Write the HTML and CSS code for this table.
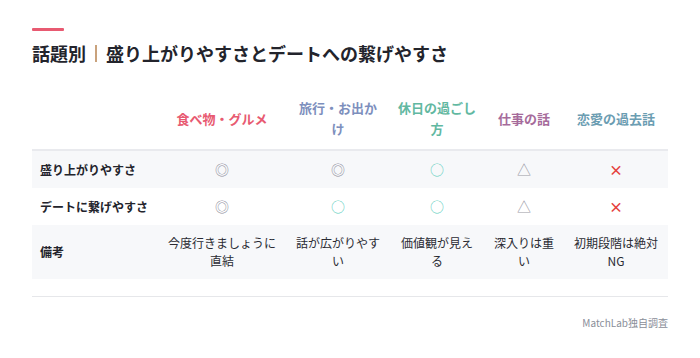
FILE: index.html
```html
<!DOCTYPE html>
<html lang="ja">
<head>
<meta charset="utf-8">
<link rel="stylesheet" href="styles.css">
</head>
<body>
<div class="page">
  <div class="accent"></div>
  <h1 class="title">話題別<span class="sep"></span>盛り上がりやすさとデートへの繋げやすさ</h1>
  <table class="grid">
    <colgroup>
      <col class="c1"><col class="c2"><col class="c3"><col class="c4"><col class="c5"><col class="c6">
    </colgroup>
    <thead>
      <tr>
        <th></th>
        <th class="h-food">食べ物・グルメ</th>
        <th class="h-trip">旅行・お出かけ</th>
        <th class="h-holiday">休日の過ごし方</th>
        <th class="h-work">仕事の話</th>
        <th class="h-love">恋愛の過去話</th>
      </tr>
    </thead>
    <tbody>
      <tr class="alt">
        <td class="label">盛り上がりやすさ</td>
        <td><span class="mk dbl">◎</span></td>
        <td><span class="mk dbl">◎</span></td>
        <td><span class="mk ok">○</span></td>
        <td><span class="mk tri">△</span></td>
        <td><span class="mk ng">×</span></td>
      </tr>
      <tr>
        <td class="label">デートに繋げやすさ</td>
        <td><span class="mk dbl">◎</span></td>
        <td><span class="mk ok">○</span></td>
        <td><span class="mk ok">○</span></td>
        <td><span class="mk tri">△</span></td>
        <td><span class="mk ng">×</span></td>
      </tr>
      <tr class="alt">
        <td class="label">備考</td>
        <td>今度行きましょうに直結</td>
        <td>話が広がりやすい</td>
        <td>価値観が見える</td>
        <td>深入りは重い</td>
        <td>初期段階は絶対NG</td>
      </tr>
    </tbody>
  </table>
  <div class="source">MatchLab独自調査</div>
</div>
</body>
</html>
```

FILE: styles.css
```css
html, body {
  margin: 0;
  padding: 0;
  background: #ffffff;
}
body {
  font-family: "Noto Sans CJK JP", "Noto Sans", sans-serif;
  color: #23242c;
}
.page {
  padding: 28px 32px 0 32px;
}
.accent {
  width: 32px;
  height: 3px;
  background: #e85a71;
  border-radius: 1px;
}
.title {
  margin: 9px 0 0 0;
  font-size: 18px;
  line-height: 26px;
  font-weight: 700;
  color: #23242c;
  display: flex;
  align-items: center;
}
.sep {
  display: inline-block;
  width: 2px;
  height: 17px;
  background: #c9a27c;
  margin: 0 9px;
}
.grid {
  margin-top: 21px;
  width: 636px;
  border-collapse: collapse;
  table-layout: fixed;
}
.c1 { width: 126px; }
.c2 { width: 128px; }
.c3 { width: 104px; }
.c4 { width: 94px; }
.c5 { width: 80px; }
.c6 { width: 104px; }
.grid th {
  font-size: 13px;
  line-height: 21px;
  font-weight: 700;
  padding: 10px 7px;
  text-align: center;
  vertical-align: middle;
  border-bottom: 2px solid #e9eaee;
}
.h-food { color: #e85a71; }
.h-trip { color: #7d8fbd; }
.h-holiday { color: #62b8a1; }
.h-work { color: #a66b9b; }
.h-love { color: #6b9db2; }
.grid td {
  font-size: 12px;
  line-height: 18px;
  padding: 9px 6px;
  text-align: center;
  vertical-align: middle;
  color: #2a2b33;
}
.grid td.label {
  text-align: left;
  padding-left: 8px;
  font-weight: 700;
  color: #23242c;
}
.grid tr.alt td {
  background: #f7f8fa;
}
.mk {
  font-size: 14px;
  line-height: 18px;
}
.dbl { color: #8e8e9c; }
.ok { color: #62cfc0; }
.tri { color: #9a9aa6; }
.ng { color: #e5413c; font-weight: 700; }
.source {
  margin-top: 17px;
  border-top: 1px solid #e6e7ea;
  padding-top: 18px;
  text-align: right;
  font-size: 10px;
  line-height: 16px;
  color: #8a8e99;
}
```
